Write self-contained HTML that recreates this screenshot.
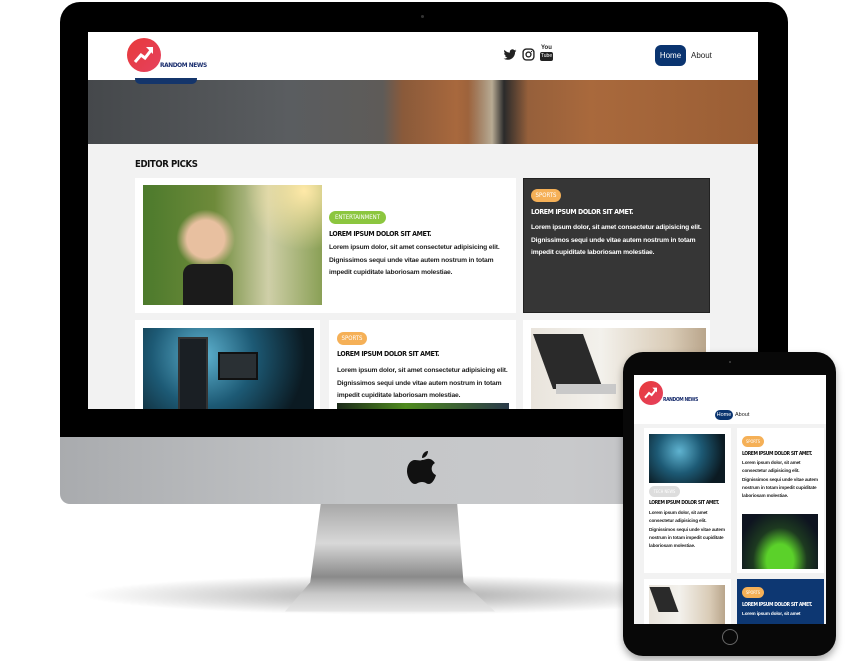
<!DOCTYPE html>
<html><head><meta charset="utf-8"><style>
*{margin:0;padding:0;box-sizing:border-box}
body{width:858px;height:661px;background:#fff;position:relative;overflow:hidden;font-family:"Liberation Sans",sans-serif}
.a{position:absolute}
.cond{font-family:"DejaVu Sans Condensed","Liberation Sans",sans-serif;font-weight:bold;letter-spacing:-0.4px}
.badge{position:absolute;border-radius:8px;color:#fff;font-size:6px;line-height:13px;text-align:center;font-family:"DejaVu Sans Condensed",sans-serif}
.txt{position:absolute;font-size:6.7px;line-height:12.5px;color:#222;font-weight:bold;letter-spacing:-0.15px;font-family:"Liberation Sans",sans-serif}
.ttl{position:absolute;font-size:7px;color:#111}
</style></head><body>
<!-- shadow -->
<div class="a" style="left:80px;top:575px;width:640px;height:40px;border-radius:50%;background:radial-gradient(ellipse at center,rgba(0,0,0,.35),rgba(0,0,0,0) 70%)"></div>
<!-- stand -->
<div class="a" style="left:285px;top:504px;width:210px;height:112px;clip-path:polygon(17% 0,82% 0,85% 70%,100% 96%,0 96%,12% 70%);background:linear-gradient(180deg,#a8a8a8 0%,#d8d8d8 35%,#8a8a8a 65%,#c8c8c8 80%,#efefef 100%)"></div>
<!-- monitor -->
<div class="a" style="left:60px;top:2px;width:728px;height:437px;background:#000;border-radius:20px 20px 0 0"></div>
<div class="a" style="left:60px;top:437px;width:728px;height:67px;background:linear-gradient(90deg,#a9abae,#c4c6c8 40%,#c8c9cb 70%,#b8babd);border-radius:0 0 10px 10px"></div>
<div class="a" style="left:421px;top:15px;width:3px;height:3px;border-radius:50%;background:#333"></div>
<!-- apple -->
<svg class="a" style="left:406px;top:449px" width="32" height="40" viewBox="0 0 32 40"><path d="M22 2c0 4-3 7-6 7 0-4 3-7 6-7z M16 11c3 0 5-2 8-1 3 1 4 3 5 4-5 3-4 10 1 12-1 4-4 9-7 9-3 0-3-2-7-2s-5 2-7 2C5 35 1 28 1 22c0-7 4-11 8-11 3 0 5 1 7 0z" fill="#111"/></svg>
<!-- screen -->
<div class="a" style="left:88px;top:32px;width:670px;height:377px;background:#f2f2f2;overflow:hidden">
 <div class="a" style="left:0;top:0;width:670px;height:48px;background:#fff"></div>
 <div class="a" style="left:39px;top:6px;width:34px;height:34px;border-radius:50%;background:linear-gradient(135deg,#e83a3a,#e5415e)"></div>
 <svg class="a" style="left:44px;top:11px" width="24" height="24" viewBox="0 0 24 24"><path d="M3 19l6-7 4 3 7-9" stroke="#fff" stroke-width="3" fill="none"/><path d="M14 4h7v7z" fill="#fff"/></svg>
 <div class="a cond" style="left:72px;top:29px;font-size:6.5px;color:#1a2e6e">RANDOM NEWS</div>
 <svg class="a" style="left:415px;top:16px" width="14" height="14" viewBox="0 0 24 24"><path d="M23 4.5c-.8.4-1.7.6-2.6.7.9-.6 1.6-1.4 2-2.5-.9.5-1.900.9-2.9 1.1A4.5 4.5 0 0 0 11.8 7.9 12.8 12.8 0 0 1 2.5 3.2a4.5 4.5 0 0 0 1.4 6 4.4 4.4 0 0 1-2-.6v.1c0 2.2 1.5 4 3.6 4.4-.7.2-1.4.2-2 .1.6 1.8 2.2 3.1 4.2 3.1A9 9 0 0 1 1 18.2 12.7 12.7 0 0 0 7.9 20.2c8.3 0 12.8-6.900 12.8-12.8v-.6c.9-.6 1.6-1.4 2.3-2.3z" fill="#222"/></svg>
 <svg class="a" style="left:434px;top:16px" width="13" height="13" viewBox="0 0 24 24"><rect x="2" y="2" width="20" height="20" rx="6" stroke="#222" stroke-width="2.5" fill="none"/><circle cx="12" cy="12" r="4.5" stroke="#222" stroke-width="2.5" fill="none"/><circle cx="17.5" cy="6.5" r="1.3" fill="#222"/></svg>
 <div class="a" style="left:453px;top:13px;font-size:6px;line-height:6px;color:#222;font-weight:bold">You</div>
 <div class="a" style="left:452px;top:20px;width:13px;height:9px;background:#222;border-radius:2px;color:#fff;font-size:5px;line-height:9px;text-align:center">Tube</div>
 <div class="a" style="left:567px;top:13px;width:31px;height:21px;border-radius:6px;background:#0a3470;color:#fff;font-size:8px;line-height:21px;text-align:center">Home</div>
 <div class="a" style="left:603px;top:19px;font-size:8px;color:#222">About</div>
 <!-- hero -->
 <div class="a" style="left:0;top:48px;width:670px;height:64px;background:linear-gradient(90deg,#45484b 0%,#5a5d60 30%,#5e5b58 44%,#8a5a3a 47%,#a8683d 55%,#8a5a3a 60%,#a9693c 75%,#9a5e35 100%)"></div>
 <div class="a" style="left:380px;top:48px;width:60px;height:64px;background:linear-gradient(90deg,rgba(0,0,0,0),#b8ab94 40%,#2b2b2b 60%,rgba(0,0,0,0))"></div>
 <div class="a" style="left:47px;top:46px;width:62px;height:6px;border-radius:0 0 5px 5px;background:#14356b"></div>
 <div class="a cond" style="left:47px;top:127px;font-size:9.5px;color:#111">EDITOR PICKS</div>
 <!-- card1 -->
 <div class="a" style="left:47px;top:146px;width:381px;height:135px;background:#fff"></div>
 <div class="a" style="left:55px;top:153px;width:179px;height:120px;background:radial-gradient(circle at 35% 45%,#e8c0a0 0 14%,rgba(0,0,0,0) 22%),radial-gradient(circle at 90% 5%,#ffe9a8,rgba(0,0,0,0) 30%),linear-gradient(90deg,#4c7a2c,#6e8a3a 40%,#cfcfa8 70%,#8aa056)"></div>
 <div class="a" style="left:95px;top:232px;width:50px;height:41px;background:#1b1b1b;border-radius:10px 10px 0 0"></div>
 <div class="badge" style="left:241px;top:179px;width:57px;background:#8cc63f">ENTERTAINMENT</div>
 <div class="ttl cond" style="left:241px;top:198px">LOREM IPSUM DOLOR SIT AMET.</div>
 <div class="txt" style="left:241px;top:210px;width:180px">Lorem ipsum dolor, sit amet consectetur adipisicing elit. Dignissimos sequi unde vitae autem nostrum in totam impedit cupiditate laboriosam molestiae.</div>
 <!-- card2 -->
 <div class="a" style="left:435px;top:146px;width:187px;height:135px;background:#363636;border:1px solid #222"></div>
 <div class="badge" style="left:443px;top:157px;width:30px;background:#f5b057">SPORTS</div>
 <div class="ttl cond" style="left:443px;top:176px;color:#fff">LOREM IPSUM DOLOR SIT AMET.</div>
 <div class="txt" style="left:443px;top:190px;width:178px;color:#fff">Lorem ipsum dolor, sit amet consectetur adipisicing elit. Dignissimos sequi unde vitae autem nostrum in totam impedit cupiditate laboriosam molestiae.</div>
 <!-- row2 -->
 <div class="a" style="left:47px;top:288px;width:185px;height:100px;background:#fff"></div>
 <div class="a" style="left:55px;top:296px;width:171px;height:90px;background:radial-gradient(circle at 35% 30%,#5fb3d0,#1d5a75 40%,#0b1a22 80%)"></div>
 <div class="a" style="left:90px;top:305px;width:30px;height:75px;background:#1a1f24;border:2px solid #333"></div>
 <div class="a" style="left:130px;top:320px;width:40px;height:28px;background:#2a3034;border:2px solid #111"></div>
 <div class="a" style="left:241px;top:288px;width:187px;height:100px;background:#fff"></div>
 <div class="badge" style="left:249px;top:300px;width:30px;background:#f5b057">SPORTS</div>
 <div class="ttl cond" style="left:249px;top:318px">LOREM IPSUM DOLOR SIT AMET.</div>
 <div class="txt" style="left:249px;top:333px;width:178px">Lorem ipsum dolor, sit amet consectetur adipisicing elit. Dignissimos sequi unde vitae autem nostrum in totam impedit cupiditate laboriosam molestiae.</div>
 <div class="a" style="left:249px;top:371px;width:172px;height:10px;background:linear-gradient(90deg,#1c2a1a,#4f8a1f 40%,#2a3a4a)"></div>
 <div class="a" style="left:435px;top:288px;width:187px;height:100px;background:#fff"></div>
 <div class="a" style="left:443px;top:296px;width:175px;height:90px;background:linear-gradient(90deg,#e9e4dc,#f3f1ec 40%,#d9cbb6 80%,#b9a58b)"></div>
 <div class="a" style="left:455px;top:302px;width:50px;height:55px;background:#2a2a2a;transform:skewX(20deg)"></div>
 <div class="a" style="left:468px;top:352px;width:60px;height:10px;background:#c9c9c9"></div>
</div>
<!-- tablet -->
<div class="a" style="left:623px;top:352px;width:213px;height:304px;background:#080808;border-radius:20px;box-shadow:0 4px 8px rgba(0,0,0,.35)"></div>
<div class="a" style="left:729px;top:361px;width:2px;height:2px;background:#444;border-radius:50%"></div>
<div class="a" style="left:722px;top:629px;width:16px;height:16px;border-radius:50%;border:1px solid #666"></div>
<div class="a" style="left:634px;top:375px;width:192px;height:249px;background:#f2f2f2;overflow:hidden">
 <div class="a" style="left:0;top:0;width:192px;height:49px;background:#fff"></div>
 <div class="a" style="left:5px;top:6px;width:24px;height:24px;border-radius:50%;background:linear-gradient(135deg,#e83a3a,#e5415e)"></div>
 <svg class="a" style="left:9px;top:10px" width="16" height="16" viewBox="0 0 24 24"><path d="M3 19l6-7 4 3 7-9" stroke="#fff" stroke-width="3" fill="none"/><path d="M14 4h7v7z" fill="#fff"/></svg>
 <div class="a cond" style="left:29px;top:22px;font-size:5px;color:#1a2e6e">RANDOM NEWS</div>
 <div class="a" style="left:81px;top:35px;width:18px;height:10px;border-radius:5px;background:#0a3470;color:#fff;font-size:5.5px;line-height:10px;text-align:center">Home</div>
 <div class="a" style="left:101px;top:37px;font-size:5.5px;color:#222">About</div>
 <div class="a" style="left:10px;top:53px;width:87px;height:145px;background:#fff"></div>
 <div class="a" style="left:15px;top:59px;width:76px;height:49px;background:radial-gradient(circle at 40% 35%,#5fb3d0,#1d5a75 40%,#0b1a22 80%)"></div>
 <div class="badge" style="left:15px;top:111px;width:31px;height:11px;line-height:11px;background:#ddd;font-size:4px">TECH NEWS</div>
 <div class="ttl cond" style="left:15px;top:125px;font-size:5px">LOREM IPSUM DOLOR SIT AMET.</div>
 <div class="txt" style="left:15px;top:134px;width:82px;font-size:4.7px;line-height:8.3px">Lorem ipsum dolor, sit amet consectetur adipisicing elit. Dignissimos sequi unde vitae autem nostrum in totam impedit cupiditate laboriosam molestiae.</div>
 <div class="a" style="left:103px;top:53px;width:87px;height:145px;background:#fff"></div>
 <div class="badge" style="left:108px;top:61px;width:22px;height:11px;line-height:11px;background:#f5b057;font-size:4px">SPORTS</div>
 <div class="ttl cond" style="left:108px;top:76px;font-size:5px">LOREM IPSUM DOLOR SIT AMET.</div>
 <div class="txt" style="left:108px;top:84px;width:82px;font-size:4.7px;line-height:8.3px">Lorem ipsum dolor, sit amet consectetur adipisicing elit. Dignissimos sequi unde vitae autem nostrum in totam impedit cupiditate laboriosam molestiae.</div>
 <div class="a" style="left:108px;top:139px;width:76px;height:55px;background:radial-gradient(ellipse at 50% 85%,#5bd12a 0 25%,#1d3a20 50%,#0e1420 80%)"></div>
 <div class="a" style="left:10px;top:204px;width:87px;height:50px;background:#fff"></div>
 <div class="a" style="left:15px;top:210px;width:76px;height:40px;background:linear-gradient(90deg,#e9e4dc,#f3f1ec 40%,#d9cbb6 80%,#b9a58b)"></div>
 <div class="a" style="left:20px;top:212px;width:20px;height:25px;background:#2a2a2a;transform:skewX(20deg)"></div>
 <div class="a" style="left:103px;top:204px;width:87px;height:50px;background:#0d3772"></div>
 <div class="badge" style="left:108px;top:212px;width:22px;height:11px;line-height:11px;background:#f5b057;font-size:4px">SPORTS</div>
 <div class="ttl cond" style="left:108px;top:227px;font-size:5px;color:#fff">LOREM IPSUM DOLOR SIT AMET.</div>
 <div class="txt" style="left:108px;top:235px;width:82px;font-size:4.7px;line-height:8.3px;color:#fff">Lorem ipsum dolor, sit amet</div>
</div>
</body></html>
